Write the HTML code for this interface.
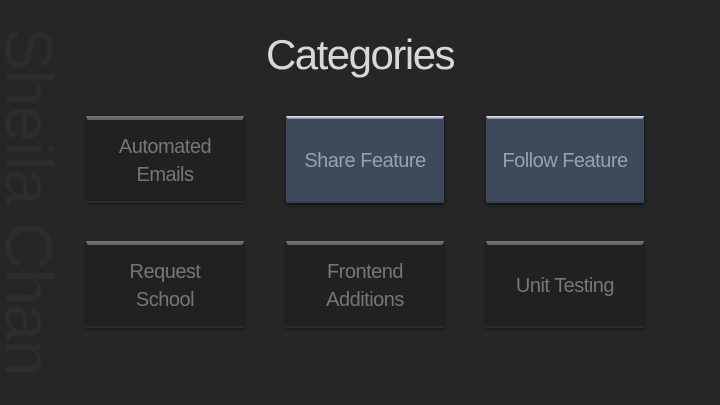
<!DOCTYPE html>
<html><head><meta charset="utf-8"><style>
html,body{margin:0;padding:0}
body{width:720px;height:405px;background:#262626;position:relative;overflow:hidden;font-family:"Liberation Sans",sans-serif}
.side{position:absolute;left:-146px;top:172px;width:350px;height:60px;transform:rotate(90deg);transform-origin:center;color:#2d2d2d;font-size:66px;line-height:60px;white-space:nowrap;font-weight:normal;letter-spacing:-1px}
h1{position:absolute;left:0;width:720px;top:29px;margin:0;text-align:center;font-weight:normal;font-size:42px;color:#d8d8d8;letter-spacing:-1.5px;line-height:52px}
.b{position:absolute;width:158px;height:87px;padding-top:5px;background:#212121;box-sizing:border-box;display:flex;align-items:center;justify-content:center;text-align:center;color:#767676;font-size:20px;line-height:28px;letter-spacing:-0.5px;border-bottom:2px solid #2c2c2c;box-shadow:0 1px 2px rgba(0,0,0,.4)}
.b:before{content:"";position:absolute;left:0;right:0;top:0;height:4px;background:linear-gradient(#777,#5e5e5e);clip-path:polygon(0 0,100% 0,99% 100%,1% 100%)}
.blue{background:#3e4a5c;color:#97a0ad;border-bottom:2px solid #35404f;box-shadow:0 2px 3px rgba(0,0,0,.6)}
.blue:before{background:linear-gradient(#e8eef8,#7a8aa0);height:3px}
</style></head><body>
<div class="side">Sheila Chan</div>
<h1>Categories</h1>
<div class="b" style="left:86px;top:116px">Automated<br>Emails</div>
<div class="b blue" style="left:286px;top:116px">Share Feature</div>
<div class="b blue" style="left:486px;top:116px">Follow Feature</div>
<div class="b" style="left:86px;top:241px">Request<br>School</div>
<div class="b" style="left:286px;top:241px">Frontend<br>Additions</div>
<div class="b" style="left:486px;top:241px">Unit Testing</div>
</body></html>
